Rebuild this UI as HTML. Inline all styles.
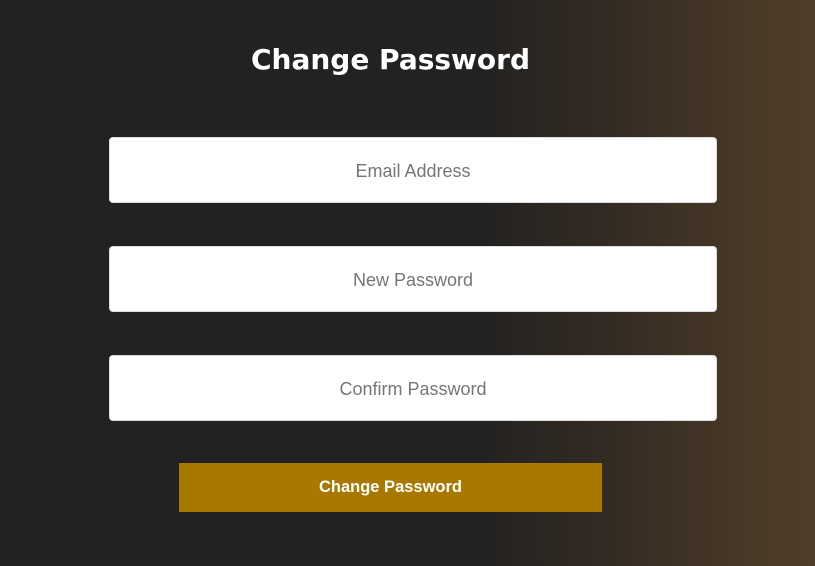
<!DOCTYPE html>
<html><head><meta charset="utf-8"><style>
html,body{margin:0;padding:0;width:815px;height:566px;overflow:hidden}
body{background:linear-gradient(90deg,#222222 0px,#232221 480px,#352c23 620px,#4a3a28 760px,#4f3d29 815px);position:relative;font-family:"Liberation Sans",sans-serif}
h1{position:absolute;left:0;width:781px;top:40px;margin:0;text-align:center;color:#fff;font-family:"DejaVu Sans",sans-serif;font-weight:bold;font-size:28px;line-height:40px}
.in{position:absolute;left:109px;width:608px;height:66px;background:#fff;border-radius:4px;color:#767676;font-size:18px;text-align:center;line-height:66px;box-sizing:border-box;border:1px solid #ddd}
.btn{position:absolute;left:179px;top:463px;width:423px;height:49px;background:#a87800;color:#fff;font-size:16.5px;font-weight:bold;text-align:center;line-height:49px}
</style></head><body>
<h1>Change Password</h1>
<div class="in" style="top:137px">Email Address</div>
<div class="in" style="top:246px">New Password</div>
<div class="in" style="top:355px">Confirm Password</div>
<div class="btn">Change Password</div>
</body></html>
